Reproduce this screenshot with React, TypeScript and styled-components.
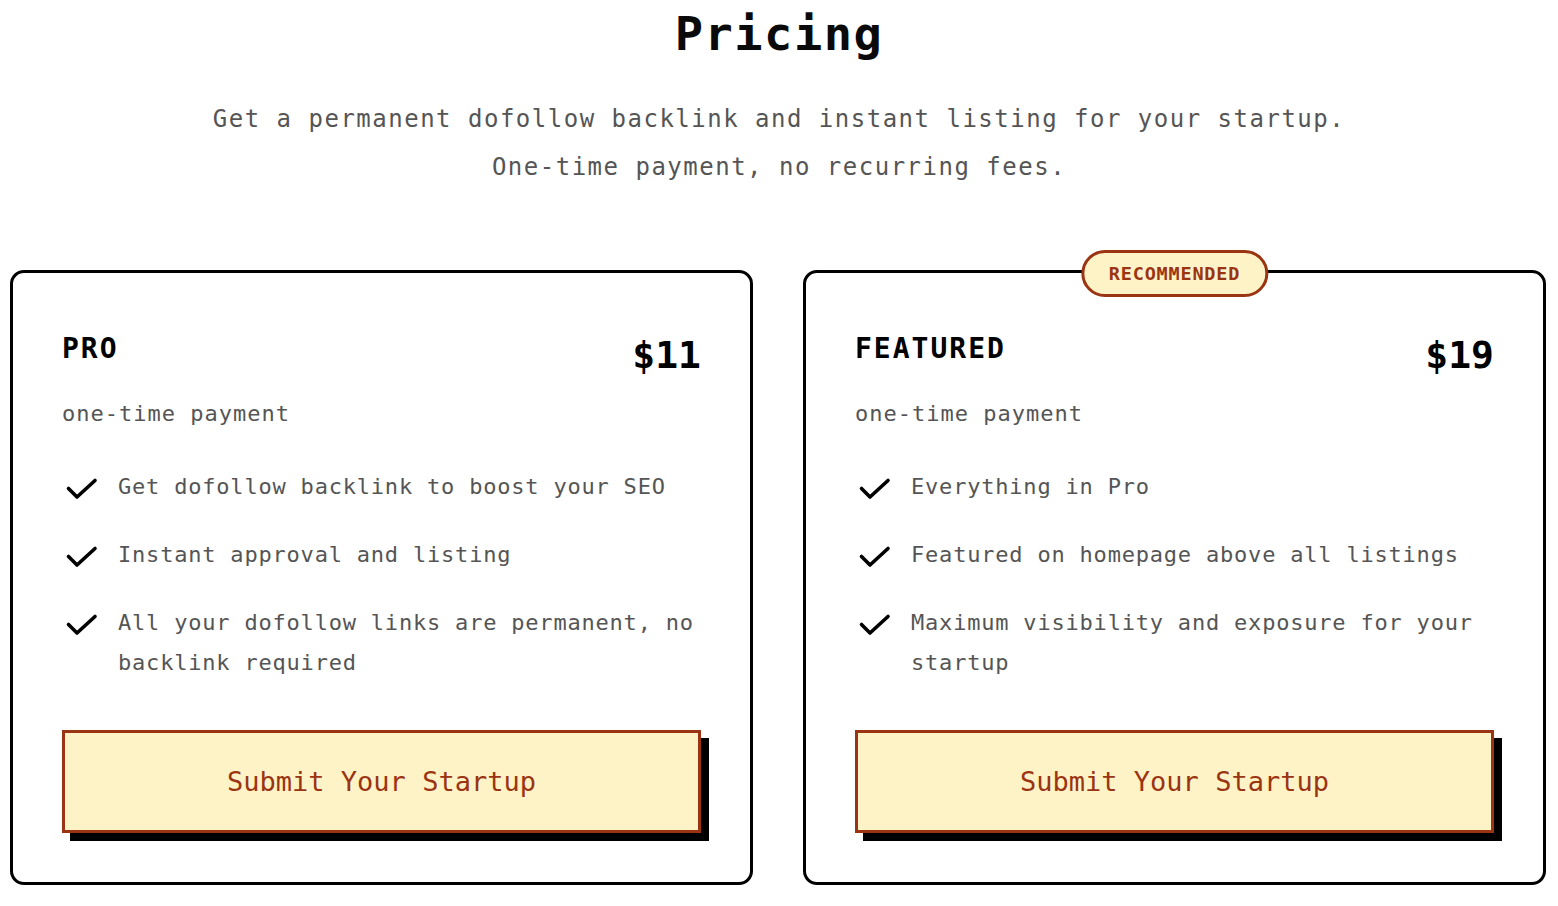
import styled, { createGlobalStyle } from "styled-components";

const GlobalStyle = createGlobalStyle`
  body {
    margin: 0;
    background: #ffffff;
    font-family: "DejaVu Sans Mono", "Liberation Mono", monospace;
    color: #0a0a0a;
  }
`;

type Plan = {
  name: string;
  price: string;
  features: string[];
  recommended?: boolean;
};

const plans: Plan[] = [
  {
    name: "PRO",
    price: "$11",
    features: [
      "Get dofollow backlink to boost your SEO",
      "Instant approval and listing",
      "All your dofollow links are permanent, no backlink required",
    ],
  },
  {
    name: "FEATURED",
    price: "$19",
    recommended: true,
    features: [
      "Everything in Pro",
      "Featured on homepage above all listings",
      "Maximum visibility and exposure for your startup",
    ],
  },
];

const CheckIcon = () => (
  <svg width="36" height="40" viewBox="0 0 36 40" fill="none">
    <path
      d="M6.5 23.5 L15 32 L33 15.5"
      stroke="#000"
      strokeWidth="3.6"
      strokeLinecap="round"
      strokeLinejoin="round"
    />
  </svg>
);

const App = () => {
  return (
    <Page>
      <GlobalStyle />
      <Title>Pricing</Title>
      <Subtitle>
        Get a permanent dofollow backlink and instant listing for your startup.
        <br />
        One-time payment, no recurring fees.
      </Subtitle>

      <Cards>
        {plans.map((plan) => (
          <Card key={plan.name}>
            {plan.recommended ? <Badge>RECOMMENDED</Badge> : null}
            <CardHead>
              <PlanName>{plan.name}</PlanName>
              <Price>{plan.price}</Price>
            </CardHead>
            <Note>one-time payment</Note>
            <Features>
              {plan.features.map((f) => (
                <Feature key={f}>
                  <IconBox>
                    <CheckIcon />
                  </IconBox>
                  <span>{f}</span>
                </Feature>
              ))}
            </Features>
            <SubmitButton>Submit Your Startup</SubmitButton>
          </Card>
        ))}
      </Cards>
    </Page>
  );
};

export default App;

const Page = styled.main`
  padding-top: 6px;
  padding-bottom: 20px;
`;

const Title = styled.h1`
  margin: 0;
  text-align: center;
  font-size: 47px;
  line-height: 56px;
  font-weight: 700;
  letter-spacing: 1.5px;
  color: #0a0a0a;
`;

const Subtitle = styled.p`
  margin: 33px 0 0;
  text-align: center;
  font-size: 24px;
  line-height: 48px;
  letter-spacing: 1.5px;
  color: #555555;
`;

const Cards = styled.section`
  margin: 79px 12px 0 10px;
  display: grid;
  grid-template-columns: 1fr 1fr;
  gap: 50px;
`;

const Card = styled.article`
  position: relative;
  border: 3px solid #000;
  border-radius: 14px;
  padding: 58px 49px 49px;
  display: flex;
  flex-direction: column;
  background: #fff;
`;

const Badge = styled.span`
  position: absolute;
  top: -23px;
  left: 50%;
  transform: translateX(-50%);
  background: #fef3c7;
  border: 3px solid #9a3412;
  border-radius: 999px;
  padding: 0 25px;
  height: 41px;
  line-height: 41px;
  font-size: 18.5px;
  font-weight: 700;
  letter-spacing: 0.8px;
  color: #9a3412;
  white-space: nowrap;
`;

const CardHead = styled.div`
  display: flex;
  justify-content: space-between;
  align-items: flex-start;
  height: 48px;
`;

const PlanName = styled.h3`
  margin: 0;
  font-size: 28px;
  line-height: 36px;
  font-weight: 700;
  letter-spacing: 2px;
  color: #000;
`;

const Price = styled.div`
  font-size: 38px;
  line-height: 48px;
  font-weight: 700;
  color: #000;
`;

const Note = styled.p`
  margin: 19px 0 0;
  font-size: 22px;
  line-height: 32px;
  letter-spacing: 1px;
  color: #555555;
`;

const Features = styled.ul`
  list-style: none;
  margin: 37px 0 0;
  padding: 0;
  display: flex;
  flex-direction: column;
  gap: 28px;
`;

const Feature = styled.li`
  display: flex;
  align-items: flex-start;
  gap: 20px;
  font-size: 22px;
  line-height: 40px;
  letter-spacing: 0.8px;
  color: #555555;
`;

const IconBox = styled.span`
  flex: 0 0 36px;
  height: 40px;
  display: flex;
  margin-top: -2px;
`;

const SubmitButton = styled.button`
  margin-top: 47px;
  height: 103px;
  width: 100%;
  background: #fef3c7;
  border: 3px solid #9a3412;
  box-shadow: 8px 8px 0 0 #000;
  font-family: "DejaVu Sans Mono", "Liberation Mono", monospace;
  font-size: 27px;
  color: #9a3412;
  cursor: pointer;
`;
